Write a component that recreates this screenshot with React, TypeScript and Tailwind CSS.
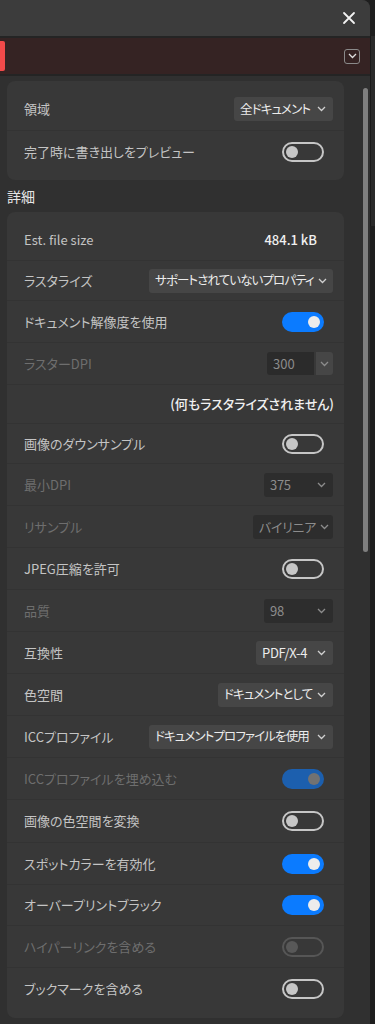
import React from 'react'

type Drop = { kind: 'drop'; value: string; w: string; disabled?: boolean; split?: boolean; tight?: boolean }
type Tog = { kind: 'toggle'; on: boolean; disabled?: boolean }
type Txt = { kind: 'text'; value: string }
type Note = { kind: 'note'; value: string }
type Row = { label?: string; disabled?: boolean; h?: string; ctrl: Drop | Tog | Txt | Note }

const Chevron = ({ color = '#c8c8c8' }: { color?: string }) => (
  <svg width="9" height="6" viewBox="0 0 9 6" fill="none" className="shrink-0">
    <polyline points="1,1 4.5,4.5 8,1" stroke={color} strokeWidth="1.3" />
  </svg>
)

function Toggle({ on, disabled }: { on: boolean; disabled?: boolean }) {
  if (on) {
    return (
      <div className={`w-[42px] h-[20px] rounded-full flex items-center justify-end pr-[4px] ${disabled ? 'bg-[#1c5fae]' : 'bg-[#0b7bff]'}`}>
        <div className={`w-[12px] h-[12px] rounded-full ${disabled ? 'bg-[#727272]' : 'bg-[#ececec]'}`} />
      </div>
    )
  }
  return (
    <div className={`w-[42px] h-[20px] rounded-full border-2 flex items-center pl-[2px] ${disabled ? 'border-[#565656]' : 'border-[#c6c6c6]'}`}>
      <div className={`w-[12px] h-[12px] rounded-full ${disabled ? 'bg-[#585858]' : 'bg-[#c6c6c6]'}`} />
    </div>
  )
}

function Dropdown({ value, w, disabled, split, tight }: Drop) {
  if (split) {
    return (
      <div className="flex h-[23px] gap-[2px]">
        <div className="w-[47px] bg-[#2b2b2b] rounded-l-[3px] pl-[6px] flex items-center text-[#8c8c8c]">{value}</div>
        <div className="w-[17px] bg-[#464646] rounded-r-[3px] flex items-center justify-center">
          <Chevron color="#8c8c8c" />
        </div>
      </div>
    )
  }
  return (
    <div
      className={`${w} h-[24px] rounded-[3px] pl-[6px] pr-[7px] flex items-center justify-between gap-[4px] ${disabled ? 'bg-[#2d2d2d] text-[#8c8c8c]' : 'bg-[#464646] text-[#ececec]'}`}
    >
      <span className={`whitespace-nowrap ${tight ? 'text-[12.5px] tracking-[-0.9px]' : 'tracking-[-0.3px]'}`}>{value}</span>
      <Chevron color={disabled ? '#8c8c8c' : '#d0d0d0'} />
    </div>
  )
}

function SettingRow({ row, first, h }: { row: Row; first: boolean; h: string }) {
  const c = row.ctrl
  return (
    <div className={`${row.h ?? h} flex items-center justify-between pl-[17px] pr-[11px] ${first ? '' : 'border-t border-[#333333]'}`}>
      <span className={row.disabled ? 'text-[#6e6e6e]' : 'text-[#c4c4c4]'}>{row.label}</span>
      {c.kind === 'toggle' && (
        <div className="mr-[9px]">
          <Toggle on={c.on} disabled={c.disabled} />
        </div>
      )}
      {c.kind === 'drop' && <Dropdown {...c} />}
      {c.kind === 'text' && <span className="mr-[16px] text-[#f0f0f0] font-medium">{c.value}</span>}
      {c.kind === 'note' && <span className="text-[#f0f0f0] font-medium -mr-[1px]">{c.value}</span>}
    </div>
  )
}

const top: Row[] = [
  { label: '領域', ctrl: { kind: 'drop', value: '全ドキュメント', w: 'w-[99px]', tight: true } },
  { label: '完了時に書き出しをプレビュー', ctrl: { kind: 'toggle', on: false } },
]

const detail: Row[] = [
  { label: 'Est. file size', h: 'h-[41px]', ctrl: { kind: 'text', value: '484.1 kB' } },
  { label: 'ラスタライズ', h: 'h-[40px]', ctrl: { kind: 'drop', value: 'サポートされていないプロパティ', w: 'w-[184px]', tight: true } },
  { label: 'ドキュメント解像度を使用', ctrl: { kind: 'toggle', on: true } },
  { label: 'ラスターDPI', disabled: true, ctrl: { kind: 'drop', value: '300', w: 'w-[66px]', split: true, disabled: true } },
  { label: '', h: 'h-[39px]', ctrl: { kind: 'note', value: '(何もラスタライズされません)' } },
  { label: '画像のダウンサンプル', h: 'h-[40px]', ctrl: { kind: 'toggle', on: false } },
  { label: '最小DPI', disabled: true, ctrl: { kind: 'drop', value: '375', w: 'w-[69px]', disabled: true } },
  { label: 'リサンプル', disabled: true, ctrl: { kind: 'drop', value: 'バイリニア', w: 'w-[80px]', disabled: true } },
  { label: 'JPEG圧縮を許可', ctrl: { kind: 'toggle', on: false } },
  { label: '品質', disabled: true, ctrl: { kind: 'drop', value: '98', w: 'w-[69px]', disabled: true } },
  { label: '互換性', ctrl: { kind: 'drop', value: 'PDF/X-4', w: 'w-[77px]' } },
  { label: '色空間', ctrl: { kind: 'drop', value: 'ドキュメントとして', w: 'w-[115px]', tight: true } },
  { label: 'ICCプロファイル', ctrl: { kind: 'drop', value: 'ドキュメントプロファイルを使用', w: 'w-[184px]', tight: true } },
  { label: 'ICCプロファイルを埋め込む', disabled: true, ctrl: { kind: 'toggle', on: true, disabled: true } },
  { label: '画像の色空間を変換', h: 'h-[43px]', ctrl: { kind: 'toggle', on: false } },
  { label: 'スポットカラーを有効化', ctrl: { kind: 'toggle', on: true } },
  { label: 'オーバープリントブラック', h: 'h-[41px]', ctrl: { kind: 'toggle', on: true } },
  { label: 'ハイパーリンクを含める', disabled: true, ctrl: { kind: 'toggle', on: false, disabled: true } },
  { label: 'ブックマークを含める', h: 'h-[43px]', ctrl: { kind: 'toggle', on: false } },
]

export default function App() {
  return (
    <div
      className="w-[375px] h-[1024px] bg-[#1e1e1e] flex overflow-hidden text-[13px] [font-feature-settings:'palt']"
      style={{ fontFamily: '"Noto Sans CJK JP", "Noto Sans", sans-serif' }}
    >
      <div className="w-[370px] h-full bg-[#303030] rounded-tr-[8px] flex flex-col overflow-hidden">
        {/* title bar */}
        <div className="h-[36px] shrink-0 bg-[#3c3c3c] flex items-center justify-end pr-[14px]">
          <svg width="14" height="14" viewBox="0 0 14 14">
            <path d="M2 2 L12 12 M12 2 L2 12" stroke="#f2f2f2" strokeWidth="1.8" strokeLinecap="round" />
          </svg>
        </div>
        <div className="h-[2px] shrink-0 bg-[#242424]" />
        {/* banner */}
        <div className="h-[36px] shrink-0 bg-[#352323] flex items-center justify-between pr-[10px]">
          <div className="w-[5px] h-[30px] bg-[#f24a4a] rounded-r-[2px]" />
          <div className="w-[16px] h-[15px] rounded-[3px] border border-[#8a8a8a] flex items-center justify-center">
            <Chevron color="#e0e0e0" />
          </div>
        </div>
        <div className="h-[2px] shrink-0 bg-[#242424]" />

        <div className="flex flex-1">
          <div className="w-[344px] pl-[7px] pt-[5px]">
            <div className="bg-[#383838] rounded-[8px] pt-[7px] pb-[8px]">
              {top.map((r, i) => (
                <SettingRow key={i} row={r} first={i === 0} h="h-[42px]" />
              ))}
            </div>
            <div className="h-[32px] flex items-center text-[14px] text-[#e6e6e6]">詳細</div>
            <div className="bg-[#383838] rounded-[8px] pt-[7px] pb-[8px]">
              {detail.map((r, i) => (
                <SettingRow key={i} row={r} first={i === 0} h="h-[42px]" />
              ))}
            </div>
          </div>
          <div className="w-[19px]" />
          <div className="w-[5px] mt-[12px] h-[464px] rounded-full bg-[#7f7f7f]" />
        </div>
      </div>
      <div className="flex-1 flex flex-col">
        <div className="h-[36px] bg-[#1e1e1e]" />
        <div className="h-[190px] bg-[#2a2a2a] border-l border-[#1a1a1a]" />
      </div>
    </div>
  )
}
